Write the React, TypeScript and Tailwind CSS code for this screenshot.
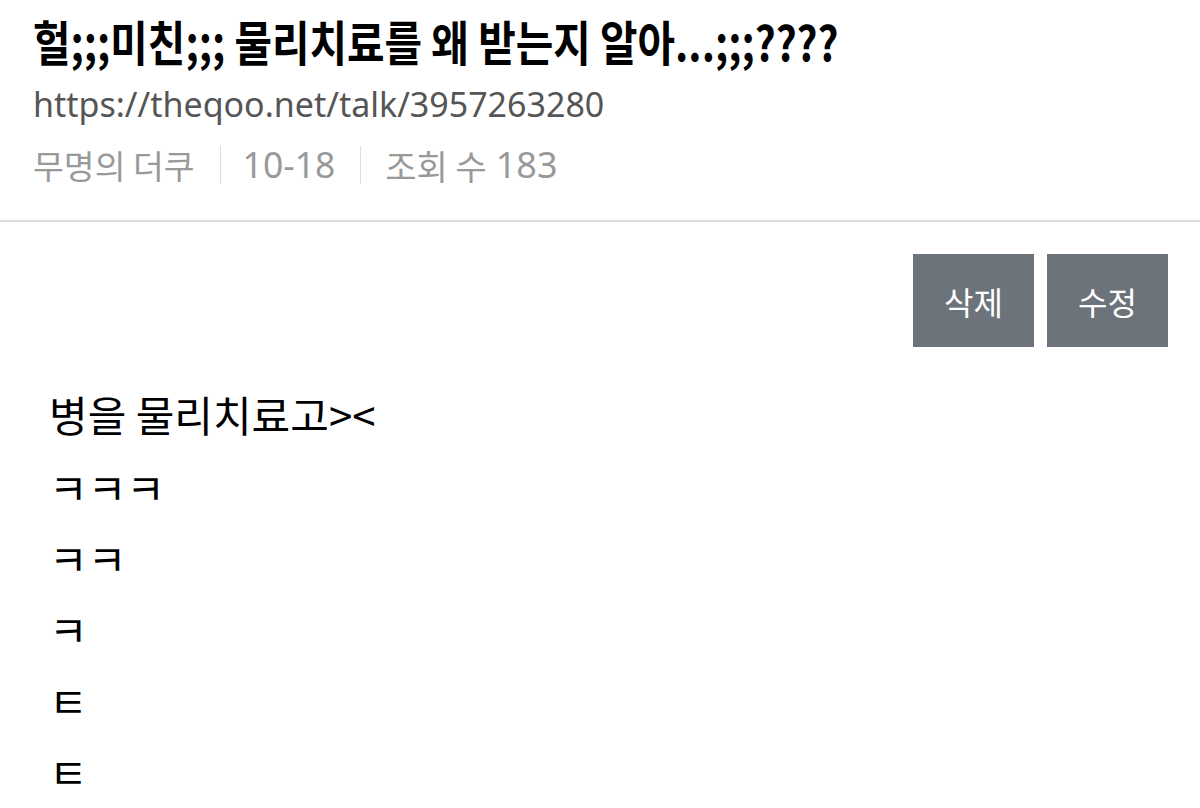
import React from "react";

const kr = { fontFamily: '"Noto Sans CJK KR", "Noto Sans", sans-serif' };
const num = { fontFamily: '"Noto Sans", "Noto Sans CJK KR", sans-serif' };

export default function App() {
  return (
    <div className="w-[1200px] h-[808px] overflow-hidden bg-white" style={kr}>
      <div className="pl-[33px]">
        <div className="h-[80px] leading-[80px] whitespace-nowrap">
          <span className="inline-block origin-left scale-x-[0.85] text-[48px] font-bold text-black">
            헐;;;미친;;; 물리치료를 왜 받는지 알아...;;;????
          </span>
        </div>
        <div
          className="h-[48px] leading-[48px] text-[34px] text-[#555555] whitespace-nowrap"
          style={num}
        >
          https://theqoo.net/talk/3957263280
        </div>
        <div className="h-[74px] flex items-center text-[#999999] whitespace-nowrap">
          <span className="text-[33.5px]">무명의 더쿠</span>
          <span className="ml-[25px] mr-[22px] w-px h-[38px] bg-[#dddddd]" />
          <span className="text-[35.5px]" style={num}>10-18</span>
          <span className="ml-[25px] mr-[24px] w-px h-[38px] bg-[#dddddd]" />
          <span className="text-[34px]">조회 수</span>
          <span className="ml-[9px] text-[36px]" style={num}>183</span>
        </div>
      </div>
      <div className="mt-[18px] h-[2px] bg-[#dcdcdc]" />
      <div className="flex justify-end gap-[13px] pr-[32px] pt-[32px]">
        <button className="w-[121px] h-[93px] bg-[#6c737b] text-white text-[32px]">삭제</button>
        <button className="w-[121px] h-[93px] bg-[#6c737b] text-white text-[32px]">수정</button>
      </div>
      <div className="pl-[49px] pt-[30px] text-black">
        <div className="h-[74px] leading-[74px] text-[42px]">병을 물리치료고&gt;&lt;</div>
        <div className="h-[71px] leading-[71px] text-[42px]">ㅋㅋㅋ</div>
        <div className="h-[71px] leading-[71px] text-[42px]">ㅋㅋ</div>
        <div className="h-[71px] leading-[71px] text-[42px]">ㅋ</div>
        <div className="h-[71px] leading-[71px] text-[42px]">ㅌ</div>
        <div className="h-[71px] leading-[71px] text-[42px]">ㅌ</div>
      </div>
    </div>
  );
}
